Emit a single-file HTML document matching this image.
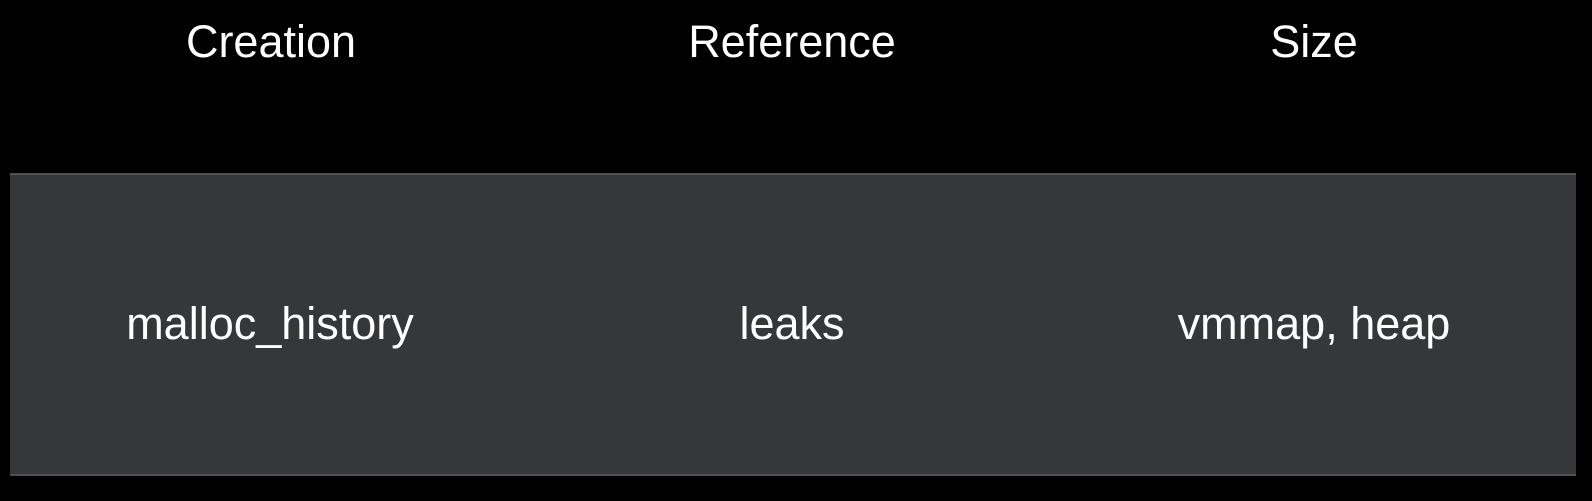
<!DOCTYPE html>
<html><head><style>
html,body{margin:0;padding:0;background:#000;width:1592px;height:501px;overflow:hidden;font-family:"Liberation Sans",sans-serif;color:#fff}
.t{position:absolute;font-size:45px;line-height:1;white-space:nowrap;transform:translateX(-50%)}
.box{position:absolute;left:10px;top:173px;width:1566px;height:303px;background:#363739;border-top:2px solid #4e5053;border-bottom:2px solid #4e5053;box-sizing:border-box}
</style></head><body>
<div class="t" style="left:271px;top:19px">Creation</div>
<div class="t" style="left:792px;top:19px">Reference</div>
<div class="t" style="left:1314px;top:19px">Size</div>
<div class="box"></div>
<div class="t" style="left:270px;top:301px">malloc_history</div>
<div class="t" style="left:792px;top:301px">leaks</div>
<div class="t" style="left:1314px;top:301px">vmmap, heap</div>
</body></html>
